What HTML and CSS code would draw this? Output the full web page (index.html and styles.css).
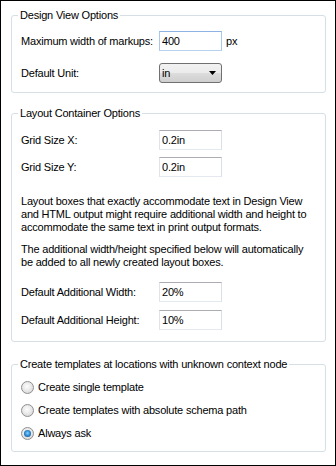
FILE: index.html
```html
<!DOCTYPE html>
<html>
<head>
<meta charset="utf-8">
<link rel="stylesheet" href="styles.css">
</head>
<body>
<div class="dialog">
  <fieldset class="group g1">
    <legend>Design View Options</legend>
    <div class="row r-max">
      <span class="lbl">Maximum width of markups:</span>
      <input class="txt focus" type="text" value="400">
      <span class="unit">px</span>
    </div>
    <div class="row r-unit">
      <span class="lbl">Default Unit:</span>
      <div class="combo"><span class="combo-val">in</span><svg class="arrow" width="7" height="4" viewBox="0 0 7 4"><path d="M0 0H7L3.5 4Z" fill="#000"/></svg></div>
    </div>
  </fieldset>

  <fieldset class="group g2">
    <legend>Layout Container Options</legend>
    <div class="row r-gx">
      <span class="lbl">Grid Size X:</span>
      <input class="txt" type="text" value="0.2in">
    </div>
    <div class="row r-gy">
      <span class="lbl">Grid Size Y:</span>
      <input class="txt" type="text" value="0.2in">
    </div>
    <p class="note n1">Layout boxes that exactly accommodate text in Design View<br>and HTML output might require additional width and height to<br>accommodate the same text in print output formats.</p>
    <p class="note n2">The additional width/height specified below will automatically<br>be added to all newly created layout boxes.</p>
    <div class="row r-aw">
      <span class="lbl">Default Additional Width:</span>
      <input class="txt" type="text" value="20%">
    </div>
    <div class="row r-ah">
      <span class="lbl">Default Additional Height:</span>
      <input class="txt" type="text" value="10%">
    </div>
  </fieldset>

  <fieldset class="group g3">
    <legend>Create templates at locations with unknown context node</legend>
    <div class="opt"><span class="radio"></span><span>Create single template</span></div>
    <div class="opt"><span class="radio"></span><span>Create templates with absolute schema path</span></div>
    <div class="opt"><span class="radio checked"></span><span>Always ask</span></div>
  </fieldset>
</div>
</body>
</html>
```

FILE: styles.css
```css
* { box-sizing: border-box; }
html, body { margin: 0; padding: 0; background: #fff; }
body {
  font-family: "Liberation Sans", Arial, sans-serif;
  font-size: 11px;
  line-height: 13px;
  letter-spacing: -0.2px;
  color: #000;
}
.dialog {
  width: 336px;
  height: 466px;
  border: 1px solid #000;
  padding: 8px 9px 0 10px;
  display: flex;
  flex-direction: column;
}
.group {
  margin: 0;
  min-width: 0;
  border: 1px solid #d5dfe5;
  border-radius: 3px;
  padding: 0 9px;
}
.group legend {
  padding: 0 2px;
  margin-left: -3px;
  line-height: 13px;
}
.g1 { padding-top: 9px; padding-bottom: 9px; }
.g2 { margin-top: 14px; padding-top: 10px; padding-bottom: 11px; }
.g3 { margin-top: 16px; padding-top: 9px; padding-bottom: 10px; display: flex; flex-direction: column; gap: 8px; }

.row {
  display: grid;
  grid-template-columns: 138px 63px auto;
  align-items: center;
  height: 20px;
}
.r-unit { margin-top: 12px; }
.r-gy { margin-top: 7px; }
.r-ah { margin-top: 8px; }

.txt {
  width: 63px;
  height: 20px;
  margin: 0;
  padding: 0 2px;
  font: inherit;
  letter-spacing: inherit;
  color: #000;
  background: #fff;
  border: 1px solid;
  border-color: #abadb3 #dbdfe6 #e3e9ef #e2e3ea;
  outline: none;
}
.txt.focus { border-color: #8db2e3 #a8c8ea #b5d3f0 #a8c8ea; }
.unit { margin-left: 4px; }

.combo {
  width: 63px;
  height: 20px;
  border: 1px solid #707070;
  border-radius: 3px;
  background: linear-gradient(#f2f2f2 0%, #ebebeb 50%, #dddddd 51%, #cfcfcf 100%);
  display: flex;
  align-items: center;
  justify-content: space-between;
  padding: 0 5px 0 2px;
}
.arrow { display: block; }

.note { margin: 18px 0 0; }
.n2 { margin-top: 9px; }
.r-aw { margin-top: 13px; }

.opt {
  display: flex;
  align-items: center;
  height: 15px;
  gap: 4px;
}
.radio {
  width: 13px;
  height: 13px;
  border-radius: 50%;
  border: 1px solid #8f8f8f;
  background: radial-gradient(circle at 45% 40%, #fdfdfd 0%, #ececec 40%, #cfcfcf 100%);
  position: relative;
  flex: none;
}
.radio.checked::after {
  content: "";
  position: absolute;
  left: 2px;
  top: 2px;
  width: 7px;
  height: 7px;
  border-radius: 50%;
  background: radial-gradient(circle at 50% 45%, #8fd3ff 0%, #2f8fd8 45%, #0d3a66 100%);
}
```
